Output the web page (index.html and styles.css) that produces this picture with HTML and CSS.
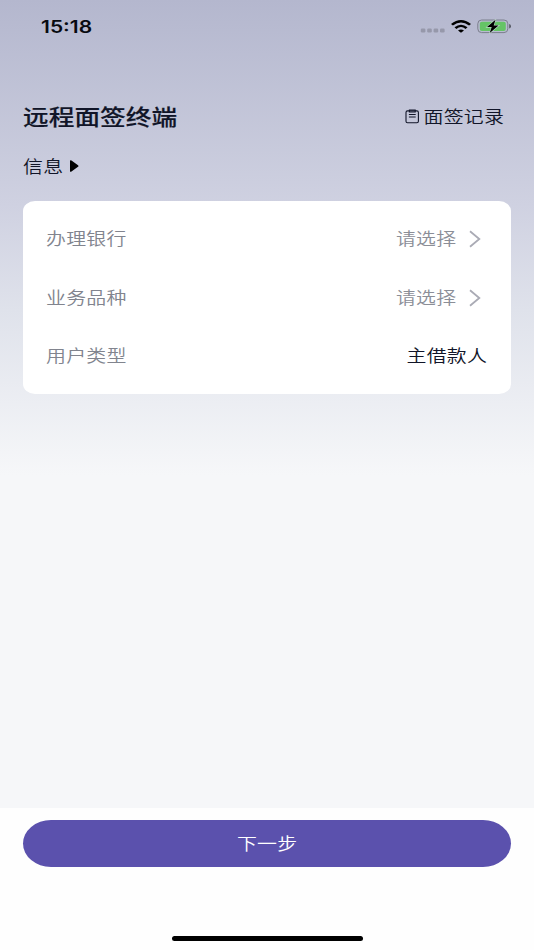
FILE: index.html
```html
<!DOCTYPE html>
<html lang="zh-CN">
<head>
<meta charset="utf-8">
<title>远程面签终端</title>
<link rel="stylesheet" href="styles.css">
</head>
<body>
<main class="screen">
  <header class="status">
    <span class="time">15:18</span>
    <div class="indicators">
      <svg class="dots" width="25" height="5" viewBox="0 0 25 5"><g fill="#9698aa"><rect x="0.8" y="0.5" width="4.6" height="4" rx="1.2"/><rect x="7.2" y="0.5" width="4.6" height="4" rx="1.2"/><rect x="13.6" y="0.5" width="4.6" height="4" rx="1.2"/><rect x="20" y="0.5" width="4.6" height="4" rx="1.2"/></g></svg>
      <svg class="wifi" width="20" height="13" viewBox="0 0 20 13"><path d="M10 12.8 7 10.4Q10 8.4 13 10.4ZM3.5 7.2Q10 2.2 16.5 7.2L14.6 8.9Q10 5.3 5.4 8.9ZM0 3.9Q10-3.7 20 3.9L18.1 5.5Q10-.5 1.9 5.5Z"/></svg>
      <svg class="battery" width="35" height="15" viewBox="0 0 35 15"><rect x=".8" y="1" width="30" height="12.6" rx="3.8" fill="none" stroke="#7b7f8c" stroke-width="1"/><rect x="2.8" y="2.7" width="26" height="9.2" rx="2" fill="#65c466"/><path d="M32.2 5Q34 5.5 34 7.2T32.2 9.5Z" fill="#555963"/><path d="M18.5 .7 10 8.1h4.7l-2 6L21.5 6.5h-4.8Z" stroke="#b9d3c6" stroke-width="1.2" paint-order="stroke"/></svg>
    </div>
  </header>
  <section class="heading">
    <h1>远程面签终端</h1>
    <a class="records"><svg width="15" height="15" viewBox="0 0 15 15" fill="none" stroke="#111528" stroke-width="1.1"><rect x="1" y="1.9" width="12.4" height="11.9" rx="1.5"/><path d="M4.4 1H10.2V3H4.4ZM3.9 5.5h6.8M3.9 8h6.8"/></svg><span class="text from-right">面签记录</span></a>
  </section>
  <div class="info"><span class="text from-left">信息</span><svg width="9" height="12" viewBox="0 0 9 12"><path d="M0 1Q0-.5 1.5.6L8 5.2Q9 6 8 6.8L1.5 11.4Q0 12.5 0 11Z"/></svg></div>
  <section class="card">
    <div class="row"><span class="text from-left">办理银行</span><span class="choice"><span class="text from-right">请选择</span><svg width="12" height="18" viewBox="0 0 12 18"><path d="m1 1.3 9.3 7.7L1 16.7"/></svg></span></div>
    <div class="row"><span class="text from-left">业务品种</span><span class="choice"><span class="text from-right">请选择</span><svg width="12" height="18" viewBox="0 0 12 18"><path d="m1 1.3 9.3 7.7L1 16.7"/></svg></span></div>
    <div class="row"><span class="text from-left">用户类型</span><span class="value text from-right">主借款人</span></div>
  </section>
  <footer class="bottom"><button><span class="text">下一步</span></button><div class="home"></div></footer>
</main>
</body>
</html>
```
FILE: styles.css
```css
* { box-sizing: border-box; }
body { margin: 0; font-family: "Noto Sans CJK SC", sans-serif; color: #111528; }
.screen { height: 950px; display: flex; flex-direction: column; background: linear-gradient(#b4b7ce 0, #cfd1e1 205px, #dfe2eb 310px, #f6f7f9 475px, #f6f7f9 100%); overflow: hidden; }
.status { height: 54px; display: flex; justify-content: space-between; padding: 0 22px 0 41px; align-items: center; }
.time { font: 600 17px/20px Inter, sans-serif; transform: scaleX(1.235); transform-origin: left; color: #080a10; }
.indicators { display: flex; align-items: center; gap: 6px; }
.dots { margin-top: 7px; }
.wifi { margin-top: -2px; }
.battery { margin-top: -1px; }
.heading { height: 76px; margin-top: 24px; padding: 0 30px 0 23px; display: flex; align-items: center; justify-content: space-between; }
h1 { margin: 0; font-size: 21.5px; font-weight: 500; line-height: 34px; transform: scaleX(1.195); transform-origin: left; -webkit-text-stroke: .15px currentColor; }
.text { display: inline-block; font-size: 16.6px; font-weight: 350; line-height: 24px; letter-spacing: .2px; transform: translateY(-1px) scaleX(1.2); }
.from-left { transform-origin: left; }
.from-right { transform-origin: right; }
.records { display: flex; align-items: center; gap: 17px; }
.records .text, .info .text { transform: scaleX(1.2); }
.info { display: flex; align-items: center; gap: 13px; padding-left: 23px; height: 24px; }
.card { margin: 23px 23px 0; height: 193px; padding: 9px 23px; border-radius: 12px / 10px; background: #fff; }
.row { height: 58.5px; display: flex; align-items: center; justify-content: space-between; color: #81848e; }
.choice { display: flex; align-items: center; gap: 13px; margin-right: 7px; color: #8b8e97; }
.choice path { fill: none; stroke: #aaabb5; stroke-width: 1.8; }
.value { color: #111528; margin-right: 1px; }
.bottom { margin-top: auto; height: 142px; padding: 12px 23px 9px; display: flex; flex-direction: column; align-items: center; background: #fefefe; }
button { width: 100%; height: 47px; border: 0; border-radius: 28px / 23.5px; background: #5b51ad; color: #fff; font-family: "Noto Sans CJK SC", sans-serif; }
.home { width: 191px; height: 5px; margin-top: auto; border-radius: 3px; background: #000; }
```
